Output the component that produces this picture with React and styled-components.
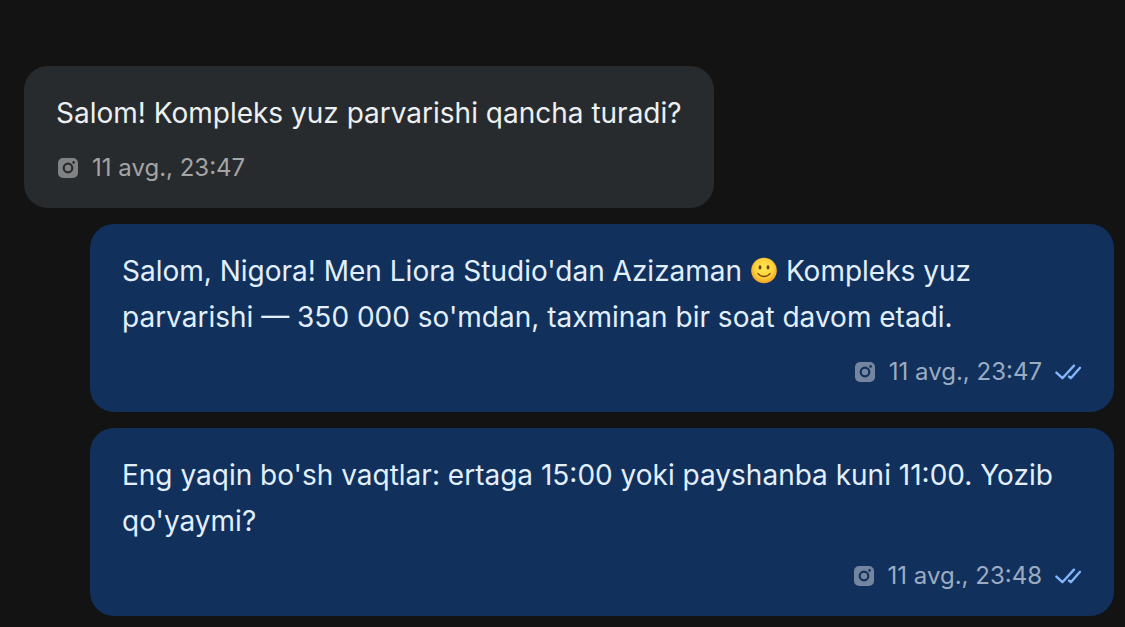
import React from "react";
import styled, { createGlobalStyle } from "styled-components";

const messages = [
  {
    id: 1,
    text: "Salom! Kompleks yuz parvarishi qancha turadi?",
    time: "11 avg., 23:47",
    outgoing: false,
  },
  {
    id: 2,
    text: (
      <>
        Salom, Nigora! Men Liora Studio'dan Azizaman <Smile /> Kompleks yuz
        parvarishi — 350 000 so'mdan, taxminan bir soat davom etadi.
      </>
    ),
    time: "11 avg., 23:47",
    outgoing: true,
  },
  {
    id: 3,
    text: "Eng yaqin bo'sh vaqtlar: ertaga 15:00 yoki payshanba kuni 11:00. Yozib qo'yaymi?",
    time: "11 avg., 23:48",
    outgoing: true,
  },
];

function Smile() {
  return (
    <Emoji viewBox="0 0 28 28" role="img" aria-label="🙂">
      <defs>
        <radialGradient id="face" cx="50%" cy="42%" r="60%">
          <stop offset="0" stopColor="#ffe650" />
          <stop offset="0.6" stopColor="#fdd23c" />
          <stop offset="1" stopColor="#f09a22" />
        </radialGradient>
      </defs>
      <circle cx="14" cy="13.5" r="12.8" fill="url(#face)" />
      <ellipse cx="10" cy="10.4" rx="1.4" ry="2.1" fill="#6b3d10" />
      <ellipse cx="18" cy="10.4" rx="1.4" ry="2.1" fill="#6b3d10" />
      <path
        d="M8 16.6c3 3.8 9 3.8 12 0"
        fill="none"
        stroke="#7a4510"
        strokeWidth="1.4"
        strokeLinecap="round"
      />
    </Emoji>
  );
}

function InstagramIcon() {
  return (
    <Channel viewBox="0 0 20 20" role="img" aria-label="Instagram">
      <path
        fillRule="evenodd"
        d="M5 0h10a5 5 0 0 1 5 5v10a5 5 0 0 1-5 5H5a5 5 0 0 1-5-5V5a5 5 0 0 1 5-5zM10 4.6a5.4 5.4 0 1 0 0 10.8a5.4 5.4 0 0 0 0-10.8zM15.6 3.1a1.3 1.3 0 1 0 0 2.6a1.3 1.3 0 0 0 0-2.6z"
      />
      <circle cx="10" cy="10" r="3.2" />
    </Channel>
  );
}

function ReadIcon() {
  return (
    <Checks viewBox="0 0 28 20" role="img" aria-label="O'qilgan">
      <path d="M2.4 10.6l6 5.6L20 3.6M15 14.6l1.8 1.6L26 5.8" />
    </Checks>
  );
}

function Message({ text, time, outgoing }) {
  return (
    <Bubble $outgoing={outgoing}>
      <Text>{text}</Text>
      <Meta $outgoing={outgoing}>
        <InstagramIcon />
        <time>{time}</time>
        {outgoing && <ReadIcon />}
      </Meta>
    </Bubble>
  );
}

function App() {
  return (
    <>
      <GlobalStyle />
      <Chat>
        {messages.map((message) => (
          <Message key={message.id} {...message} />
        ))}
      </Chat>
    </>
  );
}

const GlobalStyle = createGlobalStyle`
  * {
    box-sizing: border-box;
  }

  body {
    margin: 0;
    background: #131313;
    font-family: Inter, "Liberation Sans", sans-serif;
  }
`;

const Chat = styled.main`
  display: flex;
  flex-direction: column;
  gap: 16px;
  padding: 66px 11px 11px 24px;
`;

const Bubble = styled.article`
  align-self: ${({ $outgoing }) => ($outgoing ? "flex-end" : "flex-start")};
  margin-left: ${({ $outgoing }) => ($outgoing ? "66px" : "0")};
  padding: 24px 32px;
  border-radius: 24px;
  color: ${({ $outgoing }) => ($outgoing ? "#e1efff" : "#edf0f2")};
  background: ${({ $outgoing }) => ($outgoing ? "#11305b" : "#282b2d")};
`;

const Text = styled.p`
  margin: 0 0 16px;
  font-size: 28px;
  line-height: 46px;
`;

const Meta = styled.div`
  display: flex;
  align-items: center;
  justify-content: ${({ $outgoing }) =>
    $outgoing ? "flex-end" : "flex-start"};
  font-size: 24px;
  line-height: 32px;
  color: ${({ $outgoing }) => ($outgoing ? "#9bacc2" : "#a3a5a7")};
  --icon: ${({ $outgoing }) => ($outgoing ? "#74869f" : "#808284")};
`;

const Channel = styled.svg`
  width: 20px;
  height: 20px;
  margin: 0 14px 0 2px;
  fill: var(--icon);
`;

const Checks = styled.svg`
  width: 28px;
  height: 20px;
  margin-left: 12px;
  fill: none;
  stroke: #82b5fc;
  stroke-width: 2.4;
  stroke-linecap: round;
  stroke-linejoin: round;
`;

const Emoji = styled.svg`
  width: 28px;
  height: 28px;
  vertical-align: -4px;
`;

export default App;
